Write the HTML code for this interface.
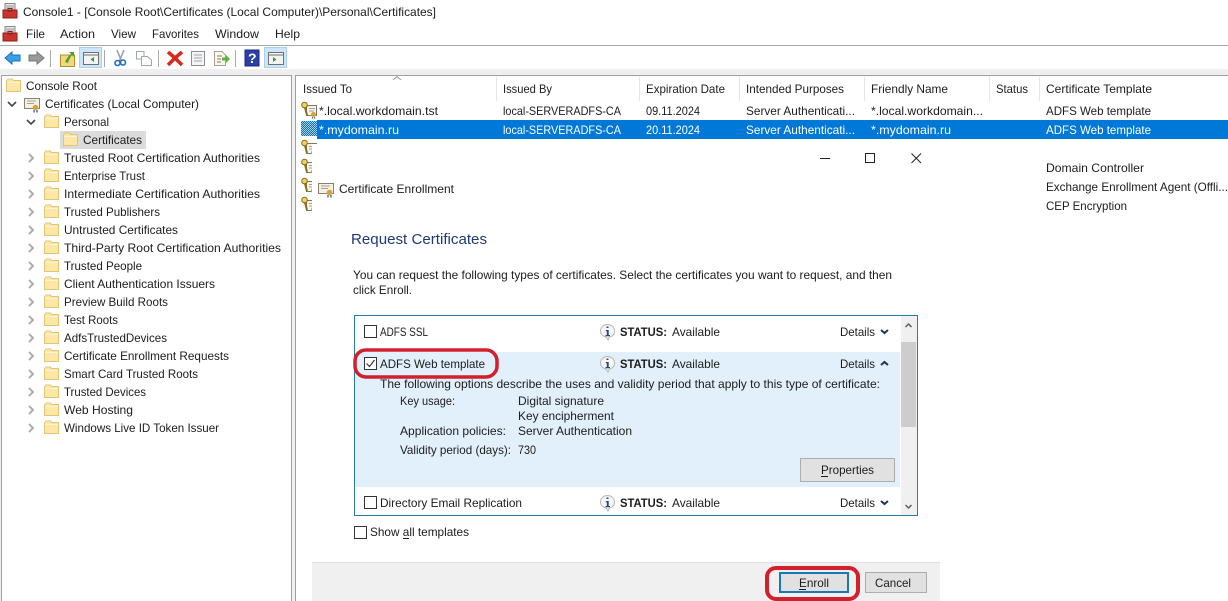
<!DOCTYPE html>
<html>
<head>
<meta charset="utf-8">
<title>Console1</title>
<style>
html,body{margin:0;padding:0;background:#fff;width:1228px;height:601px;overflow:hidden}
svg{display:block}
text{font-family:"Liberation Sans",sans-serif;font-size:12px;fill:#1c1c1c;white-space:pre}
.w{fill:#fff}
.b{font-weight:bold}
</style>
</head>
<body>
<svg width="1228" height="601" viewBox="0 0 1228 601" xmlns="http://www.w3.org/2000/svg">
<defs>
<pattern id="dith" width="2" height="2" patternUnits="userSpaceOnUse"><rect width="2" height="2" fill="#0078d7"/><rect width="1" height="1" fill="#b8c8d4"/><rect x="1" y="1" width="1" height="1" fill="#b8c8d4"/></pattern>
<g id="folder"><path d="M0.5 3V13.5H14.5V2.500H7.500L6.500 1H2L0.500 3Z" fill="#fde7a6" stroke="#e2c477"/><path d="M1.500 4.500H13.500" stroke="#fff6d8"/></g>
<path id="cr" d="M0 0L4 4L0 8" fill="none" stroke="#a6a6a6" stroke-width="1.800"/>
<path id="cd" d="M0 0L4 4L8 0" fill="none" stroke="#444" stroke-width="1.600"/>
<g id="cert"><path d="M0.500 2.500H15.500V12.500H0.500Z" fill="#f5f0e6" stroke="#8a7f70"/><path d="M3 5H12M3 7.500H10" stroke="#a89f90"/><circle cx="11.500" cy="11.500" r="2.800" fill="#e0a030"/><path d="M10 14L10 16.500M13 14V16.500" stroke="#3a6ea5" stroke-width="1.400"/></g>
<g id="certk"><path d="M5.500 3.500H15.500V13.500H5.500Z" fill="#f8f4e8" stroke="#7d7668"/><path d="M8 6.500H14M8 9H13" stroke="#a0a098"/><circle cx="3.500" cy="3" r="2.800" fill="#f0d060" stroke="#8a6c18"/><path d="M4 5.500L6 13" stroke="#8a6c18" stroke-width="2"/><circle cx="12.500" cy="12.500" r="2.500" fill="#e0a030"/><path d="M11.500 15V16.500M13.500 15V16.500" stroke="#3a6ea5" stroke-width="1.200"/></g>
<g id="info"><path d="M7.500 0.500C3.500 0.500 0.500 3.500 0.500 7C0.500 10.500 3.500 12.500 6 13L8 16L9.500 13C12.500 12.500 14.500 10.500 14.500 7C14.500 3.500 11.500 0.500 7.500 0.500Z" fill="#f6f6f6" stroke="#b5b5b5"/><path d="M6.500 4V2.500H8.500V4ZM5.800 6H8.700V11H10V12.200H5.500V11H6.800V7.200H5.800Z" fill="#224a86"/></g>
<path id="up" d="M0 4L3.500 1L7 4" fill="none" stroke="#19365f" stroke-width="2"/>
<path id="dn" d="M0 1L3.500 4L7 1" fill="none" stroke="#19365f" stroke-width="2"/>
<g id="mmc"><rect x="3" y="0.500" width="10" height="9" fill="#e8e8e8" stroke="#888"/><path d="M4 3H12M4 5H12" stroke="#999"/><rect x="1" y="7" width="14" height="8" fill="#c8342c" stroke="#8c1f1a"/><rect x="6" y="5.500" width="4" height="2.500" fill="none" stroke="#8c1f1a"/></g>
</defs>

<rect width="1228" height="601" fill="#fff"/>

<!-- title -->
<use href="#mmc" x="2" y="3"/>
<text x="23" y="16" textLength="413" lengthAdjust="spacingAndGlyphs">Console1 - [Console Root\Certificates (Local Computer)\Personal\Certificates]</text>

<!-- menu -->
<use href="#mmc" x="2" y="26"/>
<text x="26" y="38" textLength="19" lengthAdjust="spacingAndGlyphs">File</text>
<text x="60" y="38" textLength="35" lengthAdjust="spacingAndGlyphs">Action</text>
<text x="111" y="38" textLength="25" lengthAdjust="spacingAndGlyphs">View</text>
<text x="152" y="38" textLength="47" lengthAdjust="spacingAndGlyphs">Favorites</text>
<text x="215" y="38" textLength="44" lengthAdjust="spacingAndGlyphs">Window</text>
<text x="275" y="38" textLength="25" lengthAdjust="spacingAndGlyphs">Help</text>
<rect x="0" y="45" width="1228" height="1" fill="#a8a8a8"/>

<!-- toolbar -->
<rect x="0" y="46" width="1228" height="23" fill="#fff"/>
<rect x="0" y="69" width="1228" height="5" fill="#efefef"/>
<path d="M5 58L12 52V55H20V61H12V64Z" fill="#3aa0e8" stroke="#1a70b8"/>
<path d="M44 58L37 52V55H29V61H37V64Z" fill="#9a9a9a" stroke="#777"/>
<rect x="50" y="50" width="1" height="17" fill="#aaa"/>
<path d="M60.500 57V66.500H74.500V55H60.500Z" fill="#f4d77a" stroke="#b09030"/>
<path d="M65 62Q68 56 71 54L69 52H74V57L72 55Q69 59 68 63Z" fill="#50a030"/>
<rect x="79.500" y="47.500" width="22" height="20" fill="#cde5f8" stroke="#a8d0f0"/>
<rect x="83.500" y="52.500" width="15" height="12" fill="#f4f4f4" stroke="#707070"/>
<path d="M84 55H98" stroke="#707070"/><path d="M94 57V62L90.500 59.500Z" fill="#30a040"/>
<rect x="104" y="50" width="1" height="17" fill="#aaa"/>
<path d="M124 50L119 62M117 50L121 60" stroke="#9aa0a8" stroke-width="1.600" fill="none"/>
<circle cx="117.500" cy="63" r="2.500" fill="none" stroke="#1c6fc8" stroke-width="1.600"/><circle cx="123" cy="62.500" r="2.500" fill="none" stroke="#1c6fc8" stroke-width="1.600"/>
<path d="M136.500 51.500H144L144 59H136.500Z" fill="#fff" stroke="#9aa6b2"/>
<path d="M141.500 56.500H147.500L151.500 60V65.500H141.500Z" fill="#fff" stroke="#9aa6b2"/>
<rect x="158" y="50" width="1" height="17" fill="#aaa"/>
<path d="M168 52L175 58L182 52M168 65L175 58L182 65" stroke="#d42a20" stroke-width="3.600" fill="none"/>
<rect x="191.500" y="51.500" width="13" height="14" fill="#f4f4f4" stroke="#8a9096"/><path d="M194 55H202M194 58H202M194 61H202" stroke="#9aa"/>
<path d="M214.500 51.500H222L225.500 55V65.500H214.500Z" fill="#fdf8ea" stroke="#a8a090"/>
<path d="M217 56H222M217 59H221M217 62H221" stroke="#777"/>
<path d="M222 57.500H226V55L230 59L226 63V60.500H222Z" fill="#60b040"/>
<rect x="235" y="50" width="1" height="17" fill="#aaa"/>
<rect x="245" y="50" width="14" height="16" fill="#2a3fa8" stroke="#1a2a80"/>
<text x="248" y="63" class="w b" style="font-size:14px">?</text>
<rect x="264.500" y="47.500" width="22" height="20" fill="#cde5f8" stroke="#a8d0f0"/>
<rect x="268.500" y="52.500" width="15" height="12" fill="#f4f4f4" stroke="#707070"/>
<path d="M269 55H283" stroke="#707070"/><path d="M273 57V62L276.500 59.500Z" fill="#30a040"/>

<!-- panes -->
<rect x="0" y="74" width="1228" height="527" fill="#f0f0f0"/>
<rect x="1.500" y="75.500" width="290" height="530" fill="#fff" stroke="#a0a0a0"/>
<rect x="295.500" y="75.500" width="940" height="530" fill="#fff" stroke="#a0a0a0"/>

<!-- tree -->
<use href="#folder" x="6" y="78"/>
<text x="26" y="90" textLength="71" lengthAdjust="spacingAndGlyphs">Console Root</text>
<use href="#cd" x="8" y="102"/>
<use href="#cert" x="24" y="96"/>
<text x="45" y="108" textLength="154" lengthAdjust="spacingAndGlyphs">Certificates (Local Computer)</text>
<use href="#cd" x="27" y="120"/>
<use href="#folder" x="44" y="114"/>
<text x="64" y="126" textLength="45" lengthAdjust="spacingAndGlyphs">Personal</text>
<rect x="60" y="131" width="86" height="18" fill="#dcdcdc"/>
<use href="#folder" x="63" y="132"/>
<text x="83" y="144" textLength="59" lengthAdjust="spacingAndGlyphs">Certificates</text>

<use href="#cr" x="29" y="154"/><use href="#folder" x="44" y="150"/><text x="64" y="162" textLength="196" lengthAdjust="spacingAndGlyphs">Trusted Root Certification Authorities</text>
<use href="#cr" x="29" y="172"/><use href="#folder" x="44" y="168"/><text x="64" y="180" textLength="81" lengthAdjust="spacingAndGlyphs">Enterprise Trust</text>
<use href="#cr" x="29" y="190"/><use href="#folder" x="44" y="186"/><text x="64" y="198" textLength="196" lengthAdjust="spacingAndGlyphs">Intermediate Certification Authorities</text>
<use href="#cr" x="29" y="208"/><use href="#folder" x="44" y="204"/><text x="64" y="216" textLength="96" lengthAdjust="spacingAndGlyphs">Trusted Publishers</text>
<use href="#cr" x="29" y="226"/><use href="#folder" x="44" y="222"/><text x="64" y="234" textLength="114" lengthAdjust="spacingAndGlyphs">Untrusted Certificates</text>
<use href="#cr" x="29" y="244"/><use href="#folder" x="44" y="240"/><text x="64" y="252" textLength="217" lengthAdjust="spacingAndGlyphs">Third-Party Root Certification Authorities</text>
<use href="#cr" x="29" y="262"/><use href="#folder" x="44" y="258"/><text x="64" y="270" textLength="78" lengthAdjust="spacingAndGlyphs">Trusted People</text>
<use href="#cr" x="29" y="280"/><use href="#folder" x="44" y="276"/><text x="64" y="288" textLength="151" lengthAdjust="spacingAndGlyphs">Client Authentication Issuers</text>
<use href="#cr" x="29" y="298"/><use href="#folder" x="44" y="294"/><text x="64" y="306" textLength="104" lengthAdjust="spacingAndGlyphs">Preview Build Roots</text>
<use href="#cr" x="29" y="316"/><use href="#folder" x="44" y="312"/><text x="64" y="324" textLength="54" lengthAdjust="spacingAndGlyphs">Test Roots</text>
<use href="#cr" x="29" y="334"/><use href="#folder" x="44" y="330"/><text x="64" y="342" textLength="103" lengthAdjust="spacingAndGlyphs">AdfsTrustedDevices</text>
<use href="#cr" x="29" y="352"/><use href="#folder" x="44" y="348"/><text x="64" y="360" textLength="165" lengthAdjust="spacingAndGlyphs">Certificate Enrollment Requests</text>
<use href="#cr" x="29" y="370"/><use href="#folder" x="44" y="366"/><text x="64" y="378" textLength="134" lengthAdjust="spacingAndGlyphs">Smart Card Trusted Roots</text>
<use href="#cr" x="29" y="388"/><use href="#folder" x="44" y="384"/><text x="64" y="396" textLength="82" lengthAdjust="spacingAndGlyphs">Trusted Devices</text>
<use href="#cr" x="29" y="406"/><use href="#folder" x="44" y="402"/><text x="64" y="414" textLength="69" lengthAdjust="spacingAndGlyphs">Web Hosting</text>
<use href="#cr" x="29" y="424"/><use href="#folder" x="44" y="420"/><text x="64" y="432" textLength="155" lengthAdjust="spacingAndGlyphs">Windows Live ID Token Issuer</text>

<!-- list header -->
<path d="M393 80L397 76.500L401 80" fill="none" stroke="#999"/>
<rect x="496" y="77" width="1" height="24" fill="#e5e5e5"/>
<rect x="639" y="77" width="1" height="24" fill="#e5e5e5"/>
<rect x="739" y="77" width="1" height="24" fill="#e5e5e5"/>
<rect x="864" y="77" width="1" height="24" fill="#e5e5e5"/>
<rect x="989" y="77" width="1" height="24" fill="#e5e5e5"/>
<rect x="1039" y="77" width="1" height="24" fill="#e5e5e5"/>
<text x="303" y="93" textLength="49" lengthAdjust="spacingAndGlyphs">Issued To</text>
<text x="503" y="93" textLength="49" lengthAdjust="spacingAndGlyphs">Issued By</text>
<text x="646" y="93" textLength="79" lengthAdjust="spacingAndGlyphs">Expiration Date</text>
<text x="746" y="93" textLength="98" lengthAdjust="spacingAndGlyphs">Intended Purposes</text>
<text x="871" y="93" textLength="77" lengthAdjust="spacingAndGlyphs">Friendly Name</text>
<text x="996" y="93" textLength="32" lengthAdjust="spacingAndGlyphs">Status</text>
<text x="1046" y="93" textLength="106" lengthAdjust="spacingAndGlyphs">Certificate Template</text>

<!-- rows -->
<use href="#certk" x="301" y="102"/>
<text x="319" y="115" textLength="119" lengthAdjust="spacingAndGlyphs">*.local.workdomain.tst</text>
<text x="503" y="115" textLength="118" lengthAdjust="spacingAndGlyphs">local-SERVERADFS-CA</text>
<text x="646" y="115" textLength="54" lengthAdjust="spacingAndGlyphs">09.11.2024</text>
<text x="746" y="115" textLength="109" lengthAdjust="spacingAndGlyphs">Server Authenticati...</text>
<text x="871" y="115" textLength="112" lengthAdjust="spacingAndGlyphs">*.local.workdomain...</text>
<text x="1046" y="115" textLength="105" lengthAdjust="spacingAndGlyphs">ADFS Web template</text>

<rect x="317" y="120" width="911" height="19" fill="#0078d7"/>
<rect x="301" y="121" width="16" height="15" fill="url(#dith)"/>
<text x="319" y="134" class="w" textLength="80" lengthAdjust="spacingAndGlyphs">*.mydomain.ru</text>
<text x="503" y="134" class="w" textLength="118" lengthAdjust="spacingAndGlyphs">local-SERVERADFS-CA</text>
<text x="646" y="134" class="w" textLength="54" lengthAdjust="spacingAndGlyphs">20.11.2024</text>
<text x="746" y="134" class="w" textLength="109" lengthAdjust="spacingAndGlyphs">Server Authenticati...</text>
<text x="871" y="134" class="w" textLength="80" lengthAdjust="spacingAndGlyphs">*.mydomain.ru</text>
<text x="1046" y="134" class="w" textLength="105" lengthAdjust="spacingAndGlyphs">ADFS Web template</text>

<use href="#certk" x="301" y="140"/>
<use href="#certk" x="301" y="159"/>
<use href="#certk" x="301" y="178"/>
<use href="#certk" x="301" y="197"/>

<text x="1046" y="172" textLength="98" lengthAdjust="spacingAndGlyphs">Domain Controller</text>
<text x="1046" y="191" textLength="182" lengthAdjust="spacingAndGlyphs">Exchange Enrollment Agent (Offli...</text>
<text x="1046" y="210" textLength="81" lengthAdjust="spacingAndGlyphs">CEP Encryption</text>

<!-- dialog -->
<rect x="312" y="144" width="628" height="457" fill="#fff"/>
<rect x="820" y="158" width="10" height="1" fill="#222"/>
<rect x="865.500" y="153.500" width="9" height="9" fill="none" stroke="#222"/>
<path d="M911.500 153.500L921 163M921 153.500L911.500 163" stroke="#222" fill="none"/>
<use href="#cert" x="318" y="181"/>
<text x="339" y="193" textLength="115" lengthAdjust="spacingAndGlyphs">Certificate Enrollment</text>
<text x="351" y="244" textLength="136" lengthAdjust="spacingAndGlyphs" style="font-size:15px;fill:#1f3a73">Request Certificates</text>
<text x="353" y="279" textLength="539" lengthAdjust="spacingAndGlyphs">You can request the following types of certificates. Select the certificates you want to request, and then</text>
<text x="353" y="294" textLength="59" lengthAdjust="spacingAndGlyphs">click Enroll.</text>

<!-- list box -->
<rect x="354.500" y="315.500" width="563" height="200" fill="#fff" stroke="#2a7aa6"/>
<rect x="355" y="352" width="545" height="135" fill="#e2f0fb"/>
<rect x="901" y="316" width="16" height="199" fill="#f0f0f0"/>
<rect x="901" y="342" width="15" height="85" fill="#cdcdcd"/>
<path d="M905.500 327L908.500 324L911.500 327" fill="none" stroke="#606060" stroke-width="1.500"/>
<path d="M905.500 505L908.500 508L911.500 505" fill="none" stroke="#606060" stroke-width="1.500"/>

<rect x="364.500" y="325.500" width="12" height="12" fill="#fff" stroke="#333"/>
<text x="380" y="336" textLength="48" lengthAdjust="spacingAndGlyphs">ADFS SSL</text>
<use href="#info" x="600" y="324"/>
<text x="620" y="336" class="b" textLength="47" lengthAdjust="spacingAndGlyphs">STATUS:</text>
<text x="672" y="336" textLength="48" lengthAdjust="spacingAndGlyphs">Available</text>
<text x="840" y="336" textLength="35" lengthAdjust="spacingAndGlyphs">Details</text>
<use href="#dn" x="881" y="329"/>

<rect x="364.500" y="357.500" width="12" height="12" fill="#fff" stroke="#333"/>
<path d="M366.500 363.500L369.500 366.500L374.500 360" fill="none" stroke="#333" stroke-width="1.200"/>
<text x="380" y="368" textLength="105" lengthAdjust="spacingAndGlyphs">ADFS Web template</text>
<use href="#info" x="600" y="356"/>
<text x="620" y="368" class="b" textLength="47" lengthAdjust="spacingAndGlyphs">STATUS:</text>
<text x="672" y="368" textLength="48" lengthAdjust="spacingAndGlyphs">Available</text>
<text x="840" y="368" textLength="35" lengthAdjust="spacingAndGlyphs">Details</text>
<use href="#up" x="881" y="361"/>

<text x="380" y="388" textLength="500" lengthAdjust="spacingAndGlyphs">The following options describe the uses and validity period that apply to this type of certificate:</text>
<text x="400" y="405" textLength="55" lengthAdjust="spacingAndGlyphs">Key usage:</text>
<text x="518" y="405" textLength="86" lengthAdjust="spacingAndGlyphs">Digital signature</text>
<text x="518" y="420" textLength="96" lengthAdjust="spacingAndGlyphs">Key encipherment</text>
<text x="400" y="435" textLength="106" lengthAdjust="spacingAndGlyphs">Application policies:</text>
<text x="518" y="435" textLength="114" lengthAdjust="spacingAndGlyphs">Server Authentication</text>
<text x="400" y="454" textLength="111" lengthAdjust="spacingAndGlyphs">Validity period (days):</text>
<text x="518" y="454" textLength="18" lengthAdjust="spacingAndGlyphs">730</text>

<rect x="800.500" y="458.500" width="94" height="23" fill="#e1e1e1" stroke="#adadad"/>
<text x="821" y="474" textLength="53" lengthAdjust="spacingAndGlyphs">Properties</text>
<rect x="821" y="476" width="7" height="1" fill="#1c1c1c"/>

<rect x="364.500" y="496.500" width="12" height="12" fill="#fff" stroke="#333"/>
<text x="380" y="507" textLength="142" lengthAdjust="spacingAndGlyphs">Directory Email Replication</text>
<use href="#info" x="600" y="495"/>
<text x="620" y="507" class="b" textLength="47" lengthAdjust="spacingAndGlyphs">STATUS:</text>
<text x="672" y="507" textLength="48" lengthAdjust="spacingAndGlyphs">Available</text>
<text x="840" y="507" textLength="35" lengthAdjust="spacingAndGlyphs">Details</text>
<use href="#dn" x="881" y="500"/>

<rect x="354.500" y="526.500" width="12" height="12" fill="#fff" stroke="#333"/>
<text x="370" y="536" textLength="99" lengthAdjust="spacingAndGlyphs">Show all templates</text>
<rect x="403" y="538" width="6" height="1" fill="#1c1c1c"/>

<!-- button bar -->
<rect x="312" y="562" width="628" height="39" fill="#f0f0f0"/>
<rect x="312" y="562" width="628" height="1" fill="#dfdfdf"/>
<rect x="780" y="573" width="68" height="19" fill="#e1e1e1" stroke="#1a78b8" stroke-width="2"/>
<text x="799" y="587" textLength="30" lengthAdjust="spacingAndGlyphs">Enroll</text>
<rect x="799" y="589" width="7" height="1" fill="#1c1c1c"/>
<rect x="865.500" y="572.500" width="61" height="20" fill="#e1e1e1" stroke="#adadad"/>
<text x="875" y="587" textLength="36" lengthAdjust="spacingAndGlyphs">Cancel</text>

<!-- red annotations -->
<rect x="355" y="350" width="142" height="27" rx="11" ry="11" fill="none" stroke="#d1202e" stroke-width="3.500"/>
<rect x="767" y="568" width="91" height="31" rx="9" ry="9" fill="none" stroke="#d1202e" stroke-width="4"/>
</svg>
</body>
</html>
